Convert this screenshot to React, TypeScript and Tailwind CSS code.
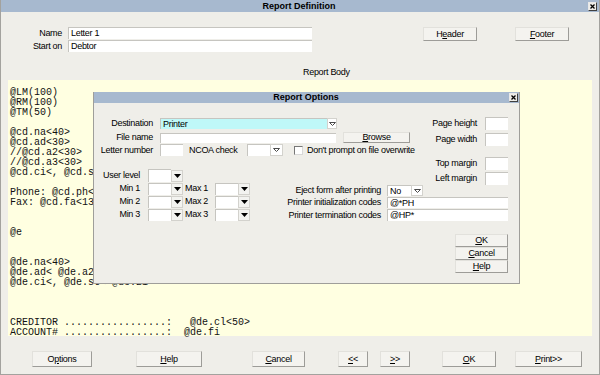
import React from 'react';

// body text of the report, one entry per line (10px rows)
const bodyLines = [
  '@LM(100)',
  '@RM(100)',
  '@TM(50)',
  '',
  '@cd.na<40>',
  '@cd.ad<30>',
  '//@cd.a2<30>',
  '//@cd.a3<30>',
  '@cd.ci<, @cd.st< @cd.zi>',
  '',
  'Phone: @cd.ph<12>',
  'Fax: @cd.fa<13>',
  '',
  '',
  '@e',
  '',
  '',
  '@de.na<40>',
  '@de.ad< @de.a2<',
  '@de.ci<, @de.st< @de.zi>',
  '',
  '',
  '',
  'CREDITOR .................:   @de.cl<50>',
  'ACCOUNT# .................:  @de.fi',
];

interface BoxProps {
  children?: React.ReactNode;
  className?: string;
}

const Btn = ({ children, className = '' }: BoxProps) => (
  <div
    className={`flex items-center justify-center bg-[#f4f3ef] border border-t-[#e2e1dc] border-l-[#e2e1dc] border-b-[#9d9c98] border-r-[#9d9c98] leading-none ${className}`}
  >
    {children}
  </div>
);

const Field = ({ children, className = '' }: BoxProps) => (
  <div
    className={`flex items-center border-t border-l border-[#c6c5c0] pl-[2px] leading-none overflow-hidden ${className}`}
  >
    {children}
  </div>
);

const Arrow = ({ filled = false, className = '' }: { filled?: boolean; className?: string }) => (
  <div
    className={`flex items-center justify-center border border-[#d3d2cd] ${
      filled ? 'bg-[#f3f3f0]' : 'bg-white'
    } ${className}`}
  >
    <svg width="7" height="4" viewBox="0 0 7 4">
      {filled ? (
        <path d="M0 0H7L3.5 4Z" fill="#000" />
      ) : (
        <path d="M0.5 0.5H6.5L3.5 3.5Z" fill="none" stroke="#4a4a4a" strokeWidth="1" />
      )}
    </svg>
  </div>
);

const CloseBox = () => (
  <div className="w-[9px] h-[9px] flex items-center justify-center bg-[#eeede8] border border-[#e8e8e8] border-b-[#404040] border-r-[#404040]">
    <svg width="5" height="5" viewBox="0 0 5 5">
      <path d="M0.5 0.5L4.5 4.5M4.5 0.5L0.5 4.5" stroke="#000" strokeWidth="1.3" />
    </svg>
  </div>
);

const MinRow = ({ n }: { n: number }) => (
  <div className="flex items-center h-[13px] leading-none">
    <span className="w-[46px] text-right">Min {n}</span>
    <Field className="ml-[8px] w-[23px] h-[12px] bg-white" />
    <Arrow filled className="w-[12px] h-[12px]" />
    <span className="ml-[2px] w-[22px]">Max {n}</span>
    <Field className="ml-[8px] w-[23px] h-[12px] bg-white" />
    <Arrow filled className="w-[12px] h-[12px]" />
  </div>
);

const MarginRow = ({ label, className = '' }: { label: string; className?: string }) => (
  <div className={`flex items-center justify-end h-[13px] leading-none ${className}`}>
    <span>{label}</span>
    <Field className="ml-[8px] w-[23px] h-[13px] bg-white" />
  </div>
);

const CodeRow = ({ label, className = '', children }: { label: string; className?: string; children: React.ReactNode }) => (
  <div className={`flex items-center h-[11px] leading-none ${className}`}>
    <span className="w-[110px] text-right">{label}</span>
    <div className="ml-[6px] flex items-center">{children}</div>
  </div>
);

const ReportOptions = () => (
  <div className="absolute left-[92px] top-[92px] w-[427px] h-[192px] flex flex-col bg-[#efeee9] border-x border-b border-[#9f9e9a]">
    <div className="h-[11px] bg-[#a7b9cf] flex items-center shrink-0">
      <div className="flex-1" />
      <div className="font-bold text-[9px] tracking-normal leading-none">Report Options</div>
      <div className="flex-1 flex justify-end pr-[1px]">
        <CloseBox />
      </div>
    </div>

    <div className="flex flex-col pt-[14px] pr-[11px] leading-none">
      {/* destination, file, letter number + page sizes */}
      <div className="flex justify-between items-start">
        <div className="flex flex-col pt-[1px]">
          <div className="flex items-center h-[11px]">
            <span className="w-[59px] text-right">Destination</span>
            <Field className="ml-[7px] w-[167px] h-[11px] bg-[#bff8f8]">Printer</Field>
            <Arrow className="w-[10px] h-[11px]" />
          </div>
          <div className="flex items-center h-[11px] mt-[3px]">
            <span className="w-[59px] text-right">File name</span>
            <Field className="ml-[7px] w-[176px] h-[10px] bg-white" />
            <Btn className="ml-[7px] w-[67px] h-[11px]">
              <u>B</u>rowse
            </Btn>
          </div>
          <div className="flex items-center h-[12px] mt-[1px]">
            <span className="w-[59px] text-right">Letter number</span>
            <Field className="ml-[7px] w-[23px] h-[12px] bg-white" />
            <span className="ml-[6px] w-[48px]">NCOA check</span>
            <Field className="ml-[10px] w-[23px] h-[12px] bg-white" />
            <Arrow className="w-[13px] h-[12px]" />
            <div className="ml-[11px] w-[9px] h-[9px] bg-white border border-[#777] border-b-[#d8d8d8] border-r-[#d8d8d8]" />
            <span className="ml-[4px]">Don't prompt on file overwrite</span>
          </div>
        </div>
        <div className="flex flex-col">
          <MarginRow label="Page height" />
          <MarginRow label="Page width" className="mt-[3px]" />
        </div>
      </div>

      {/* user level, min / max and margins, printer codes */}
      <div className="flex justify-between items-start">
        <div className="flex flex-col pt-[13px]">
          <div className="flex items-center h-[13px]">
            <span className="w-[46px] text-right">User level</span>
            <Field className="ml-[8px] w-[23px] h-[13px] bg-white" />
            <Arrow filled className="w-[12px] h-[12px]" />
          </div>
          <MinRow n={1} />
          <MinRow n={2} />
          <MinRow n={3} />
        </div>
        <div className="flex flex-col pt-[1px] w-[237px]">
          <MarginRow label="Top margin" />
          <MarginRow label="Left margin" className="mt-[2px]" />
          <CodeRow label="Eject form after printing">
            <Field className="w-[24px] h-[11px] bg-white">No</Field>
            <Arrow className="w-[12px] h-[11px]" />
          </CodeRow>
          <CodeRow label="Printer initialization codes" className="mt-[1px]">
            <Field className="w-[121px] h-[11px] bg-white">@*PH</Field>
          </CodeRow>
          <CodeRow label="Printer termination codes" className="mt-[1px] h-[12px]">
            <Field className="w-[121px] h-[12px] bg-white">@HP*</Field>
          </CodeRow>
        </div>
      </div>

      <div className="flex flex-col items-end mt-[13px]">
        <Btn className="w-[53px] h-[13px]">
          <u>O</u>K
        </Btn>
        <Btn className="w-[53px] h-[13px]">
          <u>C</u>ancel
        </Btn>
        <Btn className="w-[53px] h-[13px]">
          <u>H</u>elp
        </Btn>
      </div>
    </div>
  </div>
);

export default function App() {
  return (
    <div className="relative w-[600px] h-[375px] overflow-hidden flex flex-col whitespace-nowrap bg-[#efeee9] border-x border-b border-[#a3a29e] text-black text-[9px] tracking-[-0.3px] font-['Liberation_Sans',Arial,sans-serif]">
      <div className="h-[12px] bg-[#a7b9cf] flex items-center shrink-0">
        <div className="flex-1" />
        <div className="font-bold text-[9px] tracking-normal leading-none">Report Definition</div>
        <div className="flex-1 flex justify-end pr-[2px]">
          <CloseBox />
        </div>
      </div>

      <div className="flex items-start pt-[15px] leading-none">
        <div className="flex flex-col gap-[1px]">
          <div className="flex items-center h-[12px]">
            <span className="w-[61px] text-right">Name</span>
            <Field className="ml-[6px] w-[244px] h-[12px] bg-white">Letter 1</Field>
          </div>
          <div className="flex items-center h-[12px]">
            <span className="w-[61px] text-right">Start on</span>
            <Field className="ml-[6px] w-[244px] h-[12px] bg-white">Debtor</Field>
          </div>
        </div>
        <Btn className="ml-[111px] w-[54px] h-[14px]">
          H<u>e</u>ader
        </Btn>
        <Btn className="ml-[38px] w-[54px] h-[14px]">
          <u>F</u>ooter
        </Btn>
      </div>

      <div className="mt-[15px] pl-[302px] h-[10px] leading-[10px]">Report Body</div>

      <div className="mt-[3px] ml-[7px] w-[584px] h-[256px] shrink-0 bg-[#ffffe1] pt-[8px] pl-[2px] font-['Liberation_Mono','Courier_New',monospace] text-[10px] tracking-normal leading-[10px] text-[#111]">
        {bodyLines.map((line, i) => (
          <div key={i} className="h-[10px] whitespace-pre">
            {line}
          </div>
        ))}
      </div>

      <div className="flex items-center mt-[15px] pl-[31px]">
        <Btn className="w-[60px] h-[16px]">
          O<u>p</u>tions
        </Btn>
        <Btn className="ml-[44px] w-[66px] h-[16px]">
          <u>H</u>elp
        </Btn>
        <Btn className="ml-[50px] w-[53px] h-[16px]">
          <u>C</u>ancel
        </Btn>
        <Btn className="ml-[33px] w-[30px] h-[16px]">
          <u>&lt;</u>&lt;
        </Btn>
        <Btn className="ml-[12px] w-[30px] h-[16px]">
          <u>&gt;</u>&gt;
        </Btn>
        <Btn className="ml-[32px] w-[54px] h-[16px]">
          <u>O</u>K
        </Btn>
        <Btn className="ml-[19px] w-[67px] h-[16px]">
          <u>P</u>rint&gt;&gt;
        </Btn>
      </div>

      <ReportOptions />
    </div>
  );
}
